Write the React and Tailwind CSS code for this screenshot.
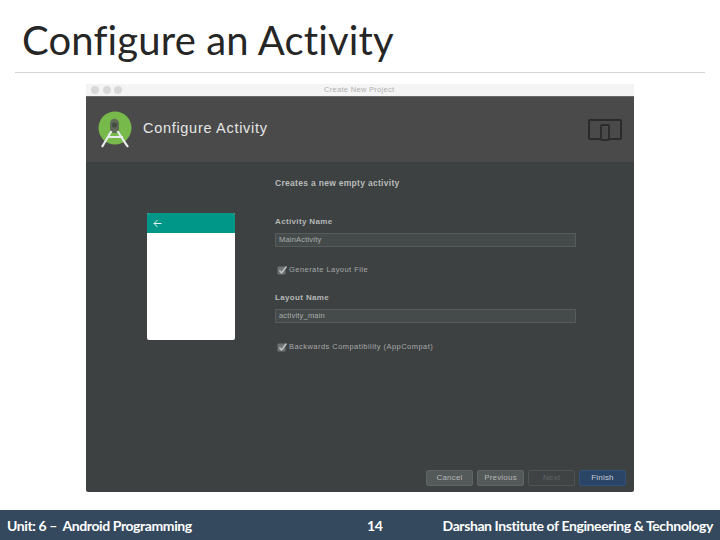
import React from 'react';

const CheckRow = ({label, className}) => (
    <div className={`flex items-center gap-[1px] pl-[2px] h-[12px] ${className}`}>
        <svg width="11" height="11" viewBox="0 0 11 11">
            <rect x="0.5" y="1.5" width="8" height="8" rx="1" fill="#6f7373" />
            <path d="M2.5 5.5 L4.5 8 L9.5 1.5" fill="none" stroke="#c8caca" strokeWidth="1.3" />
        </svg>
        <span className="text-[7.5px] text-[#a6a8a8] tracking-[0.45px]">{label}</span>
    </div>
);

const Field = ({value}) => (
    <div className="h-[14px] w-[301px] bg-[#454b4b] border border-[#565b5b] flex items-center pl-[3px] text-[7.5px] text-[#a9abab] tracking-[0.2px]">
        {value}
    </div>
);

const DialogButton = ({label, className}) => (
    <div className={`h-[16px] rounded-[2px] flex items-center justify-center text-[8px] tracking-[0.2px] ${className}`}>
        {label}
    </div>
);

const AndroidLogo = () => (
    <svg width="36" height="38" viewBox="0 0 36 38">
        <circle cx="17" cy="17" r="16.5" fill="#78b94b" />
        <path d="M12 22 L12 13 C12 6 21 6 21 13 L21 22 Z" fill="#5f6b58" />
        <circle cx="16.5" cy="14" r="2.6" fill="#454c42" />
        <path d="M13.5 20 C10.5 25 7.5 30 4 36 M19.5 20 C22.5 25 26 30 30 36 M9 26 L25 26" fill="none" stroke="#e8ecea" strokeWidth="2.2" />
    </svg>
);

const DevicesIcon = () => (
    <svg width="35" height="22" viewBox="0 0 35 22">
        <rect x="1" y="1" width="32" height="19" rx="1" fill="none" stroke="#2a2c2c" strokeWidth="2" />
        <rect x="13" y="6" width="8" height="15" rx="1" fill="#4a4a4a" stroke="#2a2c2c" strokeWidth="1.8" />
    </svg>
);

const App = () => {
    return (
        <div className="w-[720px] h-[540px] bg-white flex flex-col overflow-hidden font-['Lato',sans-serif]">
            <div className="mx-[15px] h-[73px] shrink-0 border-b border-[#d4d4d4] pl-[7px] pt-[15px]">
                <h1 className="text-[40px] leading-[50px] text-[#262626] tracking-[0.15px]">Configure an Activity</h1>
            </div>

            <div className="mt-[11px] ml-[86px] w-[548px] h-[408px] flex flex-col font-['Liberation_Sans',sans-serif]">
                <div className="h-[12px] bg-[#f4f4f4] flex items-center pl-[5px] gap-[3.5px] relative">
                    <span className="w-[8px] h-[8px] rounded-full bg-[#d8d8d8]" />
                    <span className="w-[8px] h-[8px] rounded-full bg-[#d8d8d8]" />
                    <span className="w-[8px] h-[8px] rounded-full bg-[#d8d8d8]" />
                    <span className="absolute left-[238px] text-[7.5px] text-[#b0b0b0] tracking-[0.3px]">Create New Project</span>
                </div>
                <div className="h-[66px] bg-[#4a4a4a] border-t border-[#6a6a6a] flex items-center pl-[12px] pr-[11px]">
                    <AndroidLogo />
                    <span className="ml-[9px] mb-[2px] text-[14.5px] text-[#e6e6e6] tracking-[0.7px]">Configure Activity</span>
                    <div className="ml-auto"><DevicesIcon /></div>
                </div>
                <div className="flex-1 bg-[#3d4142] rounded-b-[2px] flex flex-col">
                    <div className="flex flex-1">
                        <div className="w-[189px] pl-[61px] pt-[51px] shrink-0">
                            <div className="w-[88px] h-[127px] bg-white rounded-[2px] overflow-hidden">
                                <div className="h-[20px] bg-[#009688] flex items-center pl-[6px]">
                                    <svg width="9" height="9" viewBox="0 0 9 9">
                                        <path d="M8.5 4.5 H1 M4.5 1 L1 4.5 L4.5 8" fill="none" stroke="#e6f5f3" strokeWidth="1" />
                                    </svg>
                                </div>
                            </div>
                        </div>
                        <div className="pt-[16px] flex flex-col">
                            <div className="text-[8.5px] font-bold text-[#b9bbbb] tracking-[0.3px] h-[10px] leading-[10px]">Creates a new empty activity</div>
                            <div className="mt-[29px] text-[8px] font-bold text-[#b5b7b7] tracking-[0.35px] h-[10px] leading-[10px]">Activity Name</div>
                            <div className="mt-[6px]"><Field value="MainActivity" /></div>
                            <CheckRow label="Generate Layout File" className="mt-[17px]" />
                            <div className="mt-[17px] text-[8px] font-bold text-[#b5b7b7] tracking-[0.35px] h-[10px] leading-[10px]">Layout Name</div>
                            <div className="mt-[6px]"><Field value="activity_main" /></div>
                            <CheckRow label="Backwards Compatibility (AppCompat)" className="mt-[18px]" />
                        </div>
                    </div>
                    <div className="flex justify-end gap-[4px] pr-[8px] pb-[6px]">
                        <DialogButton label="Cancel" className="w-[47px] bg-[#54595a] border border-[#5f6464] text-[#b4b6b6]" />
                        <DialogButton label="Previous" className="w-[47px] bg-[#54595a] border border-[#5f6464] text-[#b4b6b6]" />
                        <DialogButton label="Next" className="w-[47px] bg-[#3f4344] border border-[#505455] text-[#626666]" />
                        <DialogButton label="Finish" className="w-[47px] bg-[#2b4566] border border-[#34507a] text-[#c5cdd8]" />
                    </div>
                </div>
            </div>

            <div className="mt-auto h-[30px] bg-[#34495e] flex items-center text-white text-[14px] font-bold relative tracking-[-0.4px]">
                <span className="ml-[7px] whitespace-pre">Unit: 6 –  Android Programming</span>
                <span className="absolute left-[367px]">14</span>
                <span className="absolute right-[7px]">Darshan Institute of Engineering &amp; Technology</span>
            </div>
        </div>
    );
};

export default App;
